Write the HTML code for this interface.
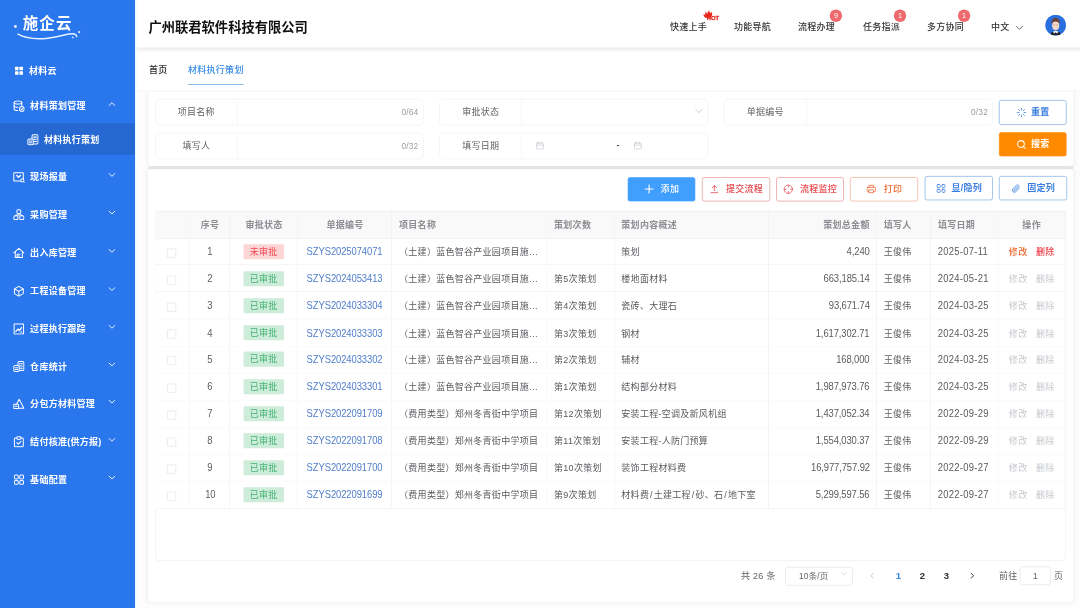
<!DOCTYPE html><html lang="zh-CN"><head><meta charset="utf-8"><title>材料执行策划</title><style>
*{box-sizing:border-box;margin:0;padding:0}
html,body{width:1080px;height:608px;overflow:hidden;background:#fdfdfd}
body{font-family:"Liberation Sans","Noto Sans CJK SC",sans-serif;color:#606266}
#app{position:absolute;left:0;top:0;width:1920px;height:1081px;transform:scale(0.5625);transform-origin:0 0;filter:opacity(1);background:#fdfdfd;overflow:hidden;font-size:16px;letter-spacing:.5px}
.abs{position:absolute}
.side{position:absolute;left:0;top:0;width:240px;height:1081px;background:#2a76ec;color:#fff}
.logo{position:absolute;left:40.5px;top:20.5px;font-size:27.5px;font-weight:700;letter-spacing:2px;line-height:44px;white-space:nowrap;font-family:"Liberation Sans","Noto Sans CJK SC",sans-serif}
.mi{position:absolute;left:0;width:240px;height:56px;line-height:56px;font-size:16px;font-weight:700;white-space:nowrap}
.mi .tx{position:absolute;left:53.5px;top:2px}
.mi svg.ic{position:absolute;left:23px;top:19px;width:21px;height:21px;stroke-width:1.7}
.mi svg.ar{position:absolute;left:192px;top:19px;width:14px;height:14px}
.mi.sub{background:#2668d1}
.mi.sub .tx{left:78px}
.mi.sub svg.ic{left:48px}
.head{position:absolute;left:242px;top:0;width:1678px;height:83px;background:#fff;z-index:3}
.hsh{position:absolute;left:242px;top:84px;width:1678px;height:9px;z-index:4;background:linear-gradient(#f3f3f3 0%,#f0f0f0 12%,#f1f1f1 40%,#f8f8f8 62%,#fafafa 85%,#fff 100%)}
.title{position:absolute;left:24px;top:0;line-height:96px;font-size:23.6px;letter-spacing:0;font-weight:700;color:#111;white-space:nowrap}
.nav{position:absolute;top:1.2px;line-height:96px;font-size:16px;color:#333;font-weight:500;white-space:nowrap}
.badge{position:absolute;width:22px;height:22px;border-radius:11px;letter-spacing:0;background:#ee6a6c;color:#fff;font-size:13px;line-height:22px;text-align:center}
.tabs{position:absolute;left:242px;top:84px;width:1678px;height:78px;background:#fff;z-index:2;border-bottom:2px solid #f9f9f9}
.tab{position:absolute;top:0;line-height:72px;font-size:16px;color:#2c2c2e;font-weight:500;white-space:nowrap}
.tab.on{color:#3a8ee6}
.card{position:absolute;background:#fff;border-radius:4px;box-shadow:0 0 10px rgba(0,0,0,.07)}
.grp{position:absolute;height:47px;border:1px solid #eceef1;border-radius:8px;background:#fff}
.grp .lb{position:absolute;left:0;top:0;width:146px;height:45px;line-height:46px;text-align:center;font-size:16px;color:#606266;border-right:1px solid #eef0f3}
.grp .cnt{position:absolute;right:8px;top:0;line-height:46px;font-size:15px;letter-spacing:.2px;color:#9a9da3}
.btn{position:absolute;height:44px;border-radius:4px;font-size:16px;font-weight:500;line-height:42px;white-space:nowrap;border:1.5px solid transparent}
.btn .t{position:absolute;top:0}
.btn svg{position:absolute}
table{border-collapse:collapse}
.tbl{position:absolute;left:275px;top:375px;width:1620px;height:622px;border:1px solid #ebeef5}
.th,.td{position:absolute;height:48.15px;line-height:52px;font-size:16px;white-space:nowrap;overflow:hidden;border-right:1px solid #eeeef0;border-bottom:1px solid #efeff1;padding:0 12px}
.th{background:#f9f9fa;color:#8c8e93;font-weight:700;height:49.5px;line-height:50px;border-top:1px solid #efeff1;z-index:2}
.td{color:#595b5f;background:#fff}
.c{text-align:center}.r{text-align:right}
.tag{display:inline-block;height:27px;line-height:27px;width:72.5px;padding:0;text-align:center;font-size:16px;border-radius:2px;vertical-align:middle;margin-top:-5px;margin-left:-1px}
.tag.g{background:#ceecda;color:#44b374}
.tag.rd{background:#fdd5d7;color:#f0484e}
i{font-style:normal;margin:0 1.6px}
.lk,.num,.amt,.dt{display:inline-block;line-height:1;font-size:18px;transform:scale(.93,1);transform-origin:50% 90%}
.lk{color:#4f7dcb;letter-spacing:-.15px;margin-left:-2px}
.num{letter-spacing:-.2px}.amt{letter-spacing:-.2px;transform-origin:100% 90%}.dt{letter-spacing:.55px;transform-origin:0 90%}
.cb{display:inline-block;width:16px;height:16px;border:1px solid #dddee1;border-radius:1.5px;background:#fff;vertical-align:middle;margin-top:0px;margin-left:-3px}
.op1{color:#f0682e;font-weight:500}.op2{color:#ee3b44;font-weight:500}.opd{color:#c6c9ce}.op2,.opd2{margin-left:15px}.opd2{color:#c6c9ce}
.pg{position:absolute;top:0;font-size:16px;color:#606266;line-height:50px;white-space:nowrap}
</style></head><body><div id="app">
<div class="side">
<div class="logo">施企云</div>
<svg class="abs" style="left:20px;top:30px;width:130px;height:46px" viewBox="0 0 130 46" fill="none" stroke="#e6f2ff" stroke-width="2.6" stroke-linecap="round"><path d="M11.800 30.800 C 25 38, 45 39.800, 62 38.300 C 80 36.800, 95 31, 107.500 30.100 C 113 29.800, 116 32, 116.400 35.200" /><circle cx="7.400" cy="17.100" r="2.600" fill="#e6f2ff" stroke="none"/><circle cx="120.800" cy="27.100" r="2" fill="#e6f2ff" stroke="none"/><circle cx="109.600" cy="36.500" r="1.600" fill="#cfe3ff" stroke="none"/></svg>
<div class="mi" style="top:96.44px"><svg class="ic" viewBox="0 0 20 20" style="" fill="none" stroke="currentColor" stroke-width="1.6" stroke-linecap="round" stroke-linejoin="round"><g fill="currentColor" stroke="none"><rect x="3.5" y="3.5" width="6" height="6" rx="1"/><rect x="11" y="3.5" width="6" height="6" rx="1"/><rect x="3.5" y="11" width="6" height="6" rx="1"/><rect x="11" y="11" width="6" height="6" rx="1"/></g></svg><span class="tx" style="margin-left:-2px">材料云</span></div>
<div class="mi" style="top:158.67px"><svg class="ic" viewBox="0 0 20 20" style="" fill="none" stroke="currentColor" stroke-width="1.6" stroke-linecap="round" stroke-linejoin="round"><ellipse cx="8.5" cy="4" rx="6.5" ry="2.6"/><path d="M2 4v11c0 1.500 2.800 2.600 6 2.600"/><path d="M15 4v5"/><path d="M2 9.500c0 1.500 2.900 2.600 6.500 2.600"/><circle cx="15" cy="15" r="4"/><path d="M13.300 15l1.300 1.300 2.200-2.400"/></svg><span class="tx">材料策划管理</span><svg class="ar" viewBox="0 0 14 14" style="" fill="none" stroke="currentColor" stroke-width="1.6" stroke-linecap="round" stroke-linejoin="round"><path d="M2 9.5 L7 4.5 L12 9.5"/></svg></div>
<div class="mi sub" style="top:219.11px"><svg class="ic" viewBox="0 0 20 20" style="" fill="none" stroke="currentColor" stroke-width="1.6" stroke-linecap="round" stroke-linejoin="round"><rect x="8.500" y="1.500" width="10" height="15.500" rx="2"/><path d="M11 5.500h5M11 9.200h5M11 12.900h5"/><rect x="1.500" y="8.500" width="9" height="10" rx="2" fill="#2668d1"/><path d="M4 12h4M4 15h4"/></svg><span class="tx">材料执行策划</span></div>
<div class="mi" style="top:284.89px"><svg class="ic" viewBox="0 0 20 20" style="" fill="none" stroke="currentColor" stroke-width="1.6" stroke-linecap="round" stroke-linejoin="round"><rect x="1.500" y="3" width="16" height="14" rx="0.500"/><path d="M6.500 7.500l3 3 3-3" stroke-width="2.400"/><circle cx="16" cy="16" r="2.700" fill="#2a76ec"/><path d="M18.200 18.200l1.300 1.300"/></svg><span class="tx">现场报量</span><svg class="ar" viewBox="0 0 14 14" style="" fill="none" stroke="currentColor" stroke-width="1.6" stroke-linecap="round" stroke-linejoin="round"><path d="M2 4.5 L7 9.5 L12 4.5"/></svg></div>
<div class="mi" style="top:352.44px"><svg class="ic" viewBox="0 0 20 20" style="" fill="none" stroke="currentColor" stroke-width="1.6" stroke-linecap="round" stroke-linejoin="round"><rect x="6.700" y="2" width="6.600" height="6" rx="2"/><rect x="1.500" y="12" width="7" height="6.500" rx="2"/><rect x="11.500" y="12" width="7" height="6.500" rx="2"/><path d="M10 8v2.500M5 12v-1.500h10V12"/></svg><span class="tx">采购管理</span><svg class="ar" viewBox="0 0 14 14" style="" fill="none" stroke="currentColor" stroke-width="1.6" stroke-linecap="round" stroke-linejoin="round"><path d="M2 4.5 L7 9.5 L12 4.5"/></svg></div>
<div class="mi" style="top:420.0px"><svg class="ic" viewBox="0 0 20 20" style="" fill="none" stroke="currentColor" stroke-width="1.6" stroke-linecap="round" stroke-linejoin="round"><path d="M1.500 10L10 2.500 18.500 10"/><path d="M4 8.500V18h12V8.500"/><path d="M7 18v-5.500h5M7 15.200h4"/></svg><span class="tx">出入库管理</span><svg class="ar" viewBox="0 0 14 14" style="" fill="none" stroke="currentColor" stroke-width="1.6" stroke-linecap="round" stroke-linejoin="round"><path d="M2 4.5 L7 9.5 L12 4.5"/></svg></div>
<div class="mi" style="top:487.55999999999995px"><svg class="ic" viewBox="0 0 20 20" style="" fill="none" stroke="currentColor" stroke-width="1.6" stroke-linecap="round" stroke-linejoin="round"><path d="M10 2l7.500 4.200v8L10 18.500 2.500 14.200v-8z"/><path d="M3 6.500l7 4 7-4M10 10.500v7.500"/></svg><span class="tx">工程设备管理</span><svg class="ar" viewBox="0 0 14 14" style="" fill="none" stroke="currentColor" stroke-width="1.6" stroke-linecap="round" stroke-linejoin="round"><path d="M2 4.5 L7 9.5 L12 4.5"/></svg></div>
<div class="mi" style="top:555.11px"><svg class="ic" viewBox="0 0 20 20" style="" fill="none" stroke="currentColor" stroke-width="1.6" stroke-linecap="round" stroke-linejoin="round"><rect x="2" y="2" width="16" height="17" rx="0.500"/><path d="M5 14.500l3.500-4 2.500 2.500 3.500-5" stroke-width="2.200"/><path d="M13 15.500h2"/></svg><span class="tx">过程执行跟踪</span><svg class="ar" viewBox="0 0 14 14" style="" fill="none" stroke="currentColor" stroke-width="1.6" stroke-linecap="round" stroke-linejoin="round"><path d="M2 4.5 L7 9.5 L12 4.5"/></svg></div>
<div class="mi" style="top:621.78px"><svg class="ic" viewBox="0 0 20 20" style="" fill="none" stroke="currentColor" stroke-width="1.6" stroke-linecap="round" stroke-linejoin="round"><rect x="8.500" y="1.500" width="10" height="15.500" rx="2"/><path d="M11 5.500h5M11 9.200h5M11 12.900h5"/><rect x="1.500" y="8.500" width="9" height="10" rx="2" fill="#2a76ec"/><path d="M4 12h4M4 15h4"/></svg><span class="tx">仓库统计</span><svg class="ar" viewBox="0 0 14 14" style="" fill="none" stroke="currentColor" stroke-width="1.6" stroke-linecap="round" stroke-linejoin="round"><path d="M2 4.5 L7 9.5 L12 4.5"/></svg></div>
<div class="mi" style="top:688.44px"><svg class="ic" viewBox="0 0 20 20" style="" fill="none" stroke="currentColor" stroke-width="1.6" stroke-linecap="round" stroke-linejoin="round"><path d="M10.500 2.500L18.500 18H2.500z"/><rect x="1.500" y="11" width="8" height="7.500" rx="0.500" fill="#2a76ec"/><path d="M4 14.700h3"/></svg><span class="tx">分包方材料管理</span><svg class="ar" viewBox="0 0 14 14" style="" fill="none" stroke="currentColor" stroke-width="1.6" stroke-linecap="round" stroke-linejoin="round"><path d="M2 4.5 L7 9.5 L12 4.5"/></svg></div>
<div class="mi" style="top:756.0px"><svg class="ic" viewBox="0 0 20 20" style="" fill="none" stroke="currentColor" stroke-width="1.6" stroke-linecap="round" stroke-linejoin="round"><rect x="2.500" y="3.500" width="15" height="15" rx="1.500"/><rect x="6.500" y="1.500" width="7" height="4" rx="1" fill="#2a76ec"/><path d="M6.500 11.500l2.500 2.500 4.500-4.800"/></svg><span class="tx">结付核准(供方报)</span><svg class="ar" viewBox="0 0 14 14" style="" fill="none" stroke="currentColor" stroke-width="1.6" stroke-linecap="round" stroke-linejoin="round"><path d="M2 4.5 L7 9.5 L12 4.5"/></svg></div>
<div class="mi" style="top:822.84px"><svg class="ic" viewBox="0 0 20 20" style="" fill="none" stroke="currentColor" stroke-width="1.6" stroke-linecap="round" stroke-linejoin="round"><rect x="2.500" y="2.500" width="6.400" height="6.400" rx="1.800"/><rect x="11.500" y="2.500" width="6.400" height="6.400" rx="1.800"/><rect x="2.500" y="11.500" width="6.400" height="6.400" rx="1.800"/><rect x="11.500" y="11.500" width="6.400" height="6.400" rx="1.800"/></svg><span class="tx">基础配置</span><svg class="ar" viewBox="0 0 14 14" style="" fill="none" stroke="currentColor" stroke-width="1.6" stroke-linecap="round" stroke-linejoin="round"><path d="M2 4.5 L7 9.5 L12 4.5"/></svg></div>
</div>
<div class="abs" style="left:240px;top:0;width:3px;height:1081px;background:linear-gradient(90deg,#e2fdff,#effefe);z-index:5"></div>
<div class="head"><div class="abs" style="left:-2px;top:0;width:1680px;height:84px">
<div class="title">广州联君软件科技有限公司</div>
<div class="nav" style="left:951.1099999999999px">快速上手</div>
<div class="nav" style="left:1064.89px">功能导航</div>
<div class="nav" style="left:1178.67px">流程办理</div>
<div class="nav" style="left:1294.22px">任务指派</div>
<div class="nav" style="left:1408.0px">多方协同</div>
<div class="nav" style="left:1521.78px">中文</div>
<div class="badge" style="left:1235.22px;top:16.56px">9</div>
<div class="badge" style="left:1349.0px;top:16.56px">1</div>
<div class="badge" style="left:1462.96px;top:16.56px">1</div>
<svg class="abs" style="left:1008.0px;top:16.0px;width:35.56px;height:21.33px" viewBox="0 0 35.56 21.33"><path d="M6 15.500 C3.500 14 2.500 11.500 2.700 9 C4 10.200 5 10.400 6 10.200 C5.200 8 5.800 6 7.500 4.800 C7.800 7 8.800 8 10 8.200 C9.800 5.500 11 3.500 13 2.600 C13 5 14 6.500 15.500 7.500 C16.200 6.800 16.500 6 16.500 5 C18 6.500 18.500 8.500 18 10.500 C17.500 12.500 16 14.500 14 15.800 Z" fill="#e8291f"/><text x="8.500" y="19.200" font-family="Liberation Sans,sans-serif" font-size="10.500" font-weight="700" letter-spacing="-0.2" fill="#e8291f" stroke="#e8291f" stroke-width="0.500">HOT</text></svg>
<svg class="abs" viewBox="0 0 14 14" style="left:1565.33px;top:42px;width:15px;height:15px;color:#606266" fill="none" stroke="currentColor" stroke-width="1.6" stroke-linecap="round" stroke-linejoin="round"><path d="M2 4.5 L7 9.5 L12 4.5"/></svg>
<svg class="abs" style="left:1617.9199999999998px;top:25.570000000000004px;width:37.4px;height:37.4px" viewBox="0 0 40 40"><defs><clipPath id="av"><circle cx="20" cy="20" r="20"/></clipPath></defs><circle cx="20" cy="20" r="20" fill="#2a6fe0"/><g clip-path="url(#av)"><path d="M9 42 C9 34 14 31.5 20 31.5 C26 31.5 31 34 31 42Z" fill="#23262f"/><path d="M14.500 32.500 L20 30 L25.500 32.500 L22.500 36 L20 33.500 L17.500 36Z" fill="#eef3fb"/><path d="M12 19 L15 27 L13 22Z" fill="#dfe8f7"/><ellipse cx="20" cy="20.500" rx="6.800" ry="8.600" fill="#f4d6c4"/><path d="M12.300 19 C11.500 10.500 15.500 6.500 20 6.500 C24.500 6.500 28.500 10.500 27.700 19 C26.500 14.500 24.500 13 20 13 C15.500 13 13.500 14.500 12.300 19Z" fill="#6b4030"/><path d="M16 19.500h2.500M21.500 19.500H24" stroke="#7a5a48" stroke-width="0.900" fill="none"/></g></svg>
</div></div>
<div class="hsh"></div>
<div class="tabs"><div class="abs" style="left:-2px;top:4px;width:1680px;height:72px">
<div class="tab" style="left:24.889999999999986px">首页</div>
<div class="tab on" style="left:94.22000000000003px">材料执行策划</div>
<div class="abs" style="left:94.22000000000003px;top:61.8px;width:99px;height:1.6px;background:#3088e4"></div>
</div></div>
<div class="abs" style="left:264.0px;top:293.33px;width:1643.56px;height:8.89px;background:#eeeeee"></div>
<div class="card" style="left:263.64px;top:162.67px;width:1643.91px;height:132.44px"></div>
<div class="grp" style="left:275.56px;top:175.82px;width:477.33px"><div class="lb">项目名称</div><span class="cnt">0/64</span></div>
<div class="grp" style="left:781.16px;top:175.82px;width:478.22px"><div class="lb">审批状态</div><svg class="abs" viewBox="0 0 14 14" style="right:8px;top:13.5px;width:15px;height:15px;color:#b4b8bf;stroke-width:1.2" fill="none" stroke="currentColor" stroke-width="1.6" stroke-linecap="round" stroke-linejoin="round"><path d="M2 4.5 L7 9.5 L12 4.5"/></svg></div>
<div class="grp" style="left:1287.11px;top:175.82px;width:478.22px"><div class="lb">单据编号</div><span class="cnt">0/32</span></div>
<div class="grp" style="left:275.56px;top:235.91px;width:477.33px"><div class="lb">填写人</div><span class="cnt">0/32</span></div>
<div class="grp" style="left:781.16px;top:235.91px;width:478.22px"><div class="lb">填写日期</div><svg class="abs" viewBox="0 0 16 16" style="left:170px;top:14px;width:16px;height:16px;color:#c0c4cc;stroke-width:1.1" fill="none" stroke="currentColor" stroke-width="1.6" stroke-linecap="round" stroke-linejoin="round"><rect x="2" y="3" width="12" height="11" rx="1"/><path d="M2 7h12M5.500 1.500v3M10.500 1.500v3"/></svg><span class="abs" style="left:314px;top:0;line-height:42px;color:#505256;font-size:16px;font-weight:700">-</span><svg class="abs" viewBox="0 0 16 16" style="left:344px;top:14px;width:16px;height:16px;color:#c0c4cc;stroke-width:1.1" fill="none" stroke="currentColor" stroke-width="1.6" stroke-linecap="round" stroke-linejoin="round"><rect x="2" y="3" width="12" height="11" rx="1"/><path d="M2 7h12M5.500 1.500v3M10.500 1.500v3"/></svg></div>
<div class="btn" style="left:1776.0px;top:178.31px;width:120.18px;height:43.73px;line-height:41.73px;color:#3a7fe0;background:#fff;border-color:#5f9ade;font-weight:700"><svg style="left:30px;top:50%;margin-top:-9.0px;width:18px;height:18px" viewBox="0 0 18 18" fill="none" stroke="currentColor" stroke-width="1.4" stroke-linecap="round" stroke-linejoin="round"><path d="M9 1.500v3M9 13.500v3M1.500 9h3M13.500 9h3M3.700 3.700l2.100 2.100M12.200 12.200l2.100 2.100M3.700 14.300l2.100-2.100M12.200 5.800l2.100-2.100"/></svg><span class="t" style="left:56px">重置</span></div>
<div class="btn" style="left:1776.0px;top:235.38px;width:120.18px;height:43.02px;line-height:41.02px;color:#fff;background:#ff8a00;border-color:#ff8a00;font-weight:700"><svg style="left:30px;top:50%;margin-top:-9.0px;width:18px;height:18px" viewBox="0 0 18 18" fill="none" stroke="currentColor" stroke-width="1.8" stroke-linecap="round" stroke-linejoin="round"><circle cx="8" cy="8" r="6"/><path d="M12.500 12.500l3.500 3.500"/></svg><span class="t" style="left:56px">搜索</span></div>
<div class="card" style="left:263.11px;top:300.98px;width:1644.44px;height:768.89px"></div>
<div class="btn" style="left:1116.44px;top:315.02px;width:120.0px;height:42.67px;line-height:40.67px;color:#fff;background:#409eff;border-color:#409eff;font-weight:500"><svg style="left:28px;top:50%;margin-top:-9.0px;width:18px;height:18px" viewBox="0 0 18 18" fill="none" stroke="currentColor" stroke-width="2" stroke-linecap="round" stroke-linejoin="round"><path d="M9 2v14M2 9h14"/></svg><span class="t" style="left:57px">添加</span></div>
<div class="btn" style="left:1248.0px;top:315.02px;width:120.89px;height:42.67px;line-height:40.67px;color:#e6484c;background:#fff;border-color:#e47777;font-weight:500"><svg style="left:12px;top:50%;margin-top:-9.0px;width:18px;height:18px" viewBox="0 0 18 18" fill="none" stroke="currentColor" stroke-width="1.4" stroke-linecap="round" stroke-linejoin="round"><path d="M9 12V3M5 7l4-4 4 4M3 15.500h12"/></svg><span class="t" style="left:41.5px">提交流程</span></div>
<div class="btn" style="left:1379.56px;top:315.02px;width:120.89px;height:42.67px;line-height:40.67px;color:#e6484c;background:#fff;border-color:#e47777;font-weight:500"><svg style="left:11px;top:50%;margin-top:-9.5px;width:19px;height:19px" viewBox="0 0 18 18" fill="none" stroke="currentColor" stroke-width="1.2" stroke-linecap="round" stroke-linejoin="round"><circle cx="9" cy="9" r="7"/><path d="M9 2v3.500M9 12.500V16M2 9h3.500M12.500 9H16"/></svg><span class="t" style="left:41.5px">流程监控</span></div>
<div class="btn" style="left:1511.11px;top:315.02px;width:120.89px;height:42.67px;line-height:40.67px;color:#ee6a34;background:#fff;border-color:#eb9a75;font-weight:500"><svg style="left:28px;top:50%;margin-top:-9.0px;width:18px;height:18px" viewBox="0 0 18 18" fill="none" stroke="currentColor" stroke-width="1.4" stroke-linecap="round" stroke-linejoin="round"><path d="M5 6V2.500h8V6"/><rect x="1.500" y="6" width="15" height="7.500" rx="1.500"/><rect x="5" y="10.500" width="8" height="5" fill="#fff"/></svg><span class="t" style="left:59px">打印</span></div>
<div class="btn" style="left:1644.44px;top:313.42px;width:120.89px;height:43.02px;line-height:41.02px;color:#3a7fe0;background:#fff;border-color:#5f9ade;font-weight:700"><svg style="left:19px;top:50%;margin-top:-9.0px;width:18px;height:18px" viewBox="0 0 18 18" fill="none" stroke="currentColor" stroke-width="1.4" stroke-linecap="round" stroke-linejoin="round"><rect x="2" y="2" width="5.500" height="5.500" rx="1.500"/><rect x="10.500" y="2" width="5.500" height="5.500" rx="1.500"/><rect x="2" y="10.500" width="5.500" height="5.500" rx="1.500"/><rect x="10.500" y="10.500" width="5.500" height="5.500" rx="1.500"/></svg><span class="t" style="left:46px">显/隐列</span></div>
<div class="btn" style="left:1776.0px;top:313.42px;width:120.89px;height:43.02px;line-height:41.02px;color:#3a7fe0;background:#fff;border-color:#5f9ade;font-weight:700"><svg style="left:20px;top:50%;margin-top:-9.0px;width:18px;height:18px" viewBox="0 0 18 18" fill="none" stroke="currentColor" stroke-width="1.4" stroke-linecap="round" stroke-linejoin="round"><path d="M15 8.500l-6.200 6.200a3.500 3.500 0 0 1-5-5l6.500-6.500a2.400 2.400 0 0 1 3.400 3.400l-6.400 6.400a1.200 1.200 0 0 1-1.700-1.700l5.800-5.800"/></svg><span class="t" style="left:49px">固定列</span></div>
<div class="abs" style="left:275.56px;top:375.11px;width:1619.56px;height:622.22px;border:1px solid #ececee;border-radius:0 0 6px 6px;background:#fff"></div>
<div class="th " style="left:275.56px;top:375.11px;width:62.75px;"></div>
<div class="th c" style="left:338.31px;top:375.11px;width:71.11000000000001px;">序号</div>
<div class="th c" style="left:409.42px;top:375.11px;width:120.88999999999993px;">审批状态</div>
<div class="th c" style="left:530.31px;top:375.11px;width:167.11px;">单据编号</div>
<div class="th " style="left:697.42px;top:375.11px;width:275.56000000000006px;">项目名称</div>
<div class="th " style="left:972.98px;top:375.11px;width:119.63999999999987px;">策划次数</div>
<div class="th " style="left:1092.62px;top:375.11px;width:274.49px;">策划内容概述</div>
<div class="th r" style="left:1367.11px;top:375.11px;width:192.0px;">策划总金额</div>
<div class="th " style="left:1559.11px;top:375.11px;width:96.36000000000013px;">填写人</div>
<div class="th " style="left:1655.47px;top:375.11px;width:119.28999999999996px;">填写日期</div>
<div class="th c" style="left:1774.76px;top:375.11px;width:119.6400000000001px;">操作</div>
<div class="td c" style="left:275.56px;top:423.11px;width:62.75px;padding:0;line-height:52.0px"><span class="cb"></span></div>
<div class="td c" style="left:338.31px;top:423.11px;width:71.11000000000001px;line-height:52.0px"><span class="num">1</span></div>
<div class="td c" style="left:409.42px;top:423.11px;width:120.88999999999993px;padding:0;line-height:52.0px"><span class="tag rd">未审批</span></div>
<div class="td c" style="left:530.31px;top:423.11px;width:167.11px;padding:0;line-height:52.0px"><span class="lk">SZYS2025074071</span></div>
<div class="td " style="left:697.42px;top:423.11px;width:275.56000000000006px;padding:0 0 0 12px;line-height:52.0px">（土建）蓝色智谷产业园项目施…</div>
<div class="td " style="left:972.98px;top:423.11px;width:119.63999999999987px;line-height:52.0px"></div>
<div class="td " style="left:1092.62px;top:423.11px;width:274.49px;line-height:52.0px">策划</div>
<div class="td r" style="left:1367.11px;top:423.11px;width:192.0px;line-height:52.0px"><span class="amt">4,240</span></div>
<div class="td " style="left:1559.11px;top:423.11px;width:96.36000000000013px;line-height:52.0px">王俊伟</div>
<div class="td " style="left:1655.47px;top:423.11px;width:119.28999999999996px;line-height:52.0px"><span class="dt">2025-07-11</span></div>
<div class="td c" style="left:1774.76px;top:423.11px;width:119.6400000000001px;padding:0;line-height:52.0px"><span class="op1">修改</span><span class="op2">删除</span></div>
<div class="td c" style="left:275.56px;top:471.26px;width:62.75px;padding:0;line-height:51.71px"><span class="cb"></span></div>
<div class="td c" style="left:338.31px;top:471.26px;width:71.11000000000001px;line-height:51.71px"><span class="num">2</span></div>
<div class="td c" style="left:409.42px;top:471.26px;width:120.88999999999993px;padding:0;line-height:51.71px"><span class="tag g">已审批</span></div>
<div class="td c" style="left:530.31px;top:471.26px;width:167.11px;padding:0;line-height:51.71px"><span class="lk">SZYS2024053413</span></div>
<div class="td " style="left:697.42px;top:471.26px;width:275.56000000000006px;padding:0 0 0 12px;line-height:51.71px">（土建）蓝色智谷产业园项目施…</div>
<div class="td " style="left:972.98px;top:471.26px;width:119.63999999999987px;line-height:51.71px">第5次策划</div>
<div class="td " style="left:1092.62px;top:471.26px;width:274.49px;line-height:51.71px">楼地面材料</div>
<div class="td r" style="left:1367.11px;top:471.26px;width:192.0px;line-height:51.71px"><span class="amt">663,185.14</span></div>
<div class="td " style="left:1559.11px;top:471.26px;width:96.36000000000013px;line-height:51.71px">王俊伟</div>
<div class="td " style="left:1655.47px;top:471.26px;width:119.28999999999996px;line-height:51.71px"><span class="dt">2024-05-21</span></div>
<div class="td c" style="left:1774.76px;top:471.26px;width:119.6400000000001px;padding:0;line-height:51.71px"><span class="opd">修改</span><span class="opd2">删除</span></div>
<div class="td c" style="left:275.56px;top:519.41px;width:62.75px;padding:0;line-height:51.42px"><span class="cb"></span></div>
<div class="td c" style="left:338.31px;top:519.41px;width:71.11000000000001px;line-height:51.42px"><span class="num">3</span></div>
<div class="td c" style="left:409.42px;top:519.41px;width:120.88999999999993px;padding:0;line-height:51.42px"><span class="tag g">已审批</span></div>
<div class="td c" style="left:530.31px;top:519.41px;width:167.11px;padding:0;line-height:51.42px"><span class="lk">SZYS2024033304</span></div>
<div class="td " style="left:697.42px;top:519.41px;width:275.56000000000006px;padding:0 0 0 12px;line-height:51.42px">（土建）蓝色智谷产业园项目施…</div>
<div class="td " style="left:972.98px;top:519.41px;width:119.63999999999987px;line-height:51.42px">第4次策划</div>
<div class="td " style="left:1092.62px;top:519.41px;width:274.49px;line-height:51.42px">瓷砖、大理石</div>
<div class="td r" style="left:1367.11px;top:519.41px;width:192.0px;line-height:51.42px"><span class="amt">93,671.74</span></div>
<div class="td " style="left:1559.11px;top:519.41px;width:96.36000000000013px;line-height:51.42px">王俊伟</div>
<div class="td " style="left:1655.47px;top:519.41px;width:119.28999999999996px;line-height:51.42px"><span class="dt">2024-03-25</span></div>
<div class="td c" style="left:1774.76px;top:519.41px;width:119.6400000000001px;padding:0;line-height:51.42px"><span class="opd">修改</span><span class="opd2">删除</span></div>
<div class="td c" style="left:275.56px;top:567.56px;width:62.75px;padding:0;line-height:51.13px"><span class="cb"></span></div>
<div class="td c" style="left:338.31px;top:567.56px;width:71.11000000000001px;line-height:51.13px"><span class="num">4</span></div>
<div class="td c" style="left:409.42px;top:567.56px;width:120.88999999999993px;padding:0;line-height:51.13px"><span class="tag g">已审批</span></div>
<div class="td c" style="left:530.31px;top:567.56px;width:167.11px;padding:0;line-height:51.13px"><span class="lk">SZYS2024033303</span></div>
<div class="td " style="left:697.42px;top:567.56px;width:275.56000000000006px;padding:0 0 0 12px;line-height:51.13px">（土建）蓝色智谷产业园项目施…</div>
<div class="td " style="left:972.98px;top:567.56px;width:119.63999999999987px;line-height:51.13px">第3次策划</div>
<div class="td " style="left:1092.62px;top:567.56px;width:274.49px;line-height:51.13px">钢材</div>
<div class="td r" style="left:1367.11px;top:567.56px;width:192.0px;line-height:51.13px"><span class="amt">1,617,302.71</span></div>
<div class="td " style="left:1559.11px;top:567.56px;width:96.36000000000013px;line-height:51.13px">王俊伟</div>
<div class="td " style="left:1655.47px;top:567.56px;width:119.28999999999996px;line-height:51.13px"><span class="dt">2024-03-25</span></div>
<div class="td c" style="left:1774.76px;top:567.56px;width:119.6400000000001px;padding:0;line-height:51.13px"><span class="opd">修改</span><span class="opd2">删除</span></div>
<div class="td c" style="left:275.56px;top:615.71px;width:62.75px;padding:0;line-height:50.84px"><span class="cb"></span></div>
<div class="td c" style="left:338.31px;top:615.71px;width:71.11000000000001px;line-height:50.84px"><span class="num">5</span></div>
<div class="td c" style="left:409.42px;top:615.71px;width:120.88999999999993px;padding:0;line-height:50.84px"><span class="tag g">已审批</span></div>
<div class="td c" style="left:530.31px;top:615.71px;width:167.11px;padding:0;line-height:50.84px"><span class="lk">SZYS2024033302</span></div>
<div class="td " style="left:697.42px;top:615.71px;width:275.56000000000006px;padding:0 0 0 12px;line-height:50.84px">（土建）蓝色智谷产业园项目施…</div>
<div class="td " style="left:972.98px;top:615.71px;width:119.63999999999987px;line-height:50.84px">第2次策划</div>
<div class="td " style="left:1092.62px;top:615.71px;width:274.49px;line-height:50.84px">辅材</div>
<div class="td r" style="left:1367.11px;top:615.71px;width:192.0px;line-height:50.84px"><span class="amt">168,000</span></div>
<div class="td " style="left:1559.11px;top:615.71px;width:96.36000000000013px;line-height:50.84px">王俊伟</div>
<div class="td " style="left:1655.47px;top:615.71px;width:119.28999999999996px;line-height:50.84px"><span class="dt">2024-03-25</span></div>
<div class="td c" style="left:1774.76px;top:615.71px;width:119.6400000000001px;padding:0;line-height:50.84px"><span class="opd">修改</span><span class="opd2">删除</span></div>
<div class="td c" style="left:275.56px;top:663.86px;width:62.75px;padding:0;line-height:50.55px"><span class="cb"></span></div>
<div class="td c" style="left:338.31px;top:663.86px;width:71.11000000000001px;line-height:50.55px"><span class="num">6</span></div>
<div class="td c" style="left:409.42px;top:663.86px;width:120.88999999999993px;padding:0;line-height:50.55px"><span class="tag g">已审批</span></div>
<div class="td c" style="left:530.31px;top:663.86px;width:167.11px;padding:0;line-height:50.55px"><span class="lk">SZYS2024033301</span></div>
<div class="td " style="left:697.42px;top:663.86px;width:275.56000000000006px;padding:0 0 0 12px;line-height:50.55px">（土建）蓝色智谷产业园项目施…</div>
<div class="td " style="left:972.98px;top:663.86px;width:119.63999999999987px;line-height:50.55px">第1次策划</div>
<div class="td " style="left:1092.62px;top:663.86px;width:274.49px;line-height:50.55px">结构部分材料</div>
<div class="td r" style="left:1367.11px;top:663.86px;width:192.0px;line-height:50.55px"><span class="amt">1,987,973.76</span></div>
<div class="td " style="left:1559.11px;top:663.86px;width:96.36000000000013px;line-height:50.55px">王俊伟</div>
<div class="td " style="left:1655.47px;top:663.86px;width:119.28999999999996px;line-height:50.55px"><span class="dt">2024-03-25</span></div>
<div class="td c" style="left:1774.76px;top:663.86px;width:119.6400000000001px;padding:0;line-height:50.55px"><span class="opd">修改</span><span class="opd2">删除</span></div>
<div class="td c" style="left:275.56px;top:712.01px;width:62.75px;padding:0;line-height:50.26px"><span class="cb"></span></div>
<div class="td c" style="left:338.31px;top:712.01px;width:71.11000000000001px;line-height:50.26px"><span class="num">7</span></div>
<div class="td c" style="left:409.42px;top:712.01px;width:120.88999999999993px;padding:0;line-height:50.26px"><span class="tag g">已审批</span></div>
<div class="td c" style="left:530.31px;top:712.01px;width:167.11px;padding:0;line-height:50.26px"><span class="lk">SZYS2022091709</span></div>
<div class="td " style="left:697.42px;top:712.01px;width:275.56000000000006px;padding:0 0 0 12px;line-height:50.26px">（费用类型）郑州冬青街中学项目</div>
<div class="td " style="left:972.98px;top:712.01px;width:119.63999999999987px;line-height:50.26px">第12次策划</div>
<div class="td " style="left:1092.62px;top:712.01px;width:274.49px;line-height:50.26px">安装工程-空调及新风机组</div>
<div class="td r" style="left:1367.11px;top:712.01px;width:192.0px;line-height:50.26px"><span class="amt">1,437,052.34</span></div>
<div class="td " style="left:1559.11px;top:712.01px;width:96.36000000000013px;line-height:50.26px">王俊伟</div>
<div class="td " style="left:1655.47px;top:712.01px;width:119.28999999999996px;line-height:50.26px"><span class="dt">2022-09-29</span></div>
<div class="td c" style="left:1774.76px;top:712.01px;width:119.6400000000001px;padding:0;line-height:50.26px"><span class="opd">修改</span><span class="opd2">删除</span></div>
<div class="td c" style="left:275.56px;top:760.16px;width:62.75px;padding:0;line-height:49.97px"><span class="cb"></span></div>
<div class="td c" style="left:338.31px;top:760.16px;width:71.11000000000001px;line-height:49.97px"><span class="num">8</span></div>
<div class="td c" style="left:409.42px;top:760.16px;width:120.88999999999993px;padding:0;line-height:49.97px"><span class="tag g">已审批</span></div>
<div class="td c" style="left:530.31px;top:760.16px;width:167.11px;padding:0;line-height:49.97px"><span class="lk">SZYS2022091708</span></div>
<div class="td " style="left:697.42px;top:760.16px;width:275.56000000000006px;padding:0 0 0 12px;line-height:49.97px">（费用类型）郑州冬青街中学项目</div>
<div class="td " style="left:972.98px;top:760.16px;width:119.63999999999987px;line-height:49.97px">第11次策划</div>
<div class="td " style="left:1092.62px;top:760.16px;width:274.49px;line-height:49.97px">安装工程-人防门预算</div>
<div class="td r" style="left:1367.11px;top:760.16px;width:192.0px;line-height:49.97px"><span class="amt">1,554,030.37</span></div>
<div class="td " style="left:1559.11px;top:760.16px;width:96.36000000000013px;line-height:49.97px">王俊伟</div>
<div class="td " style="left:1655.47px;top:760.16px;width:119.28999999999996px;line-height:49.97px"><span class="dt">2022-09-29</span></div>
<div class="td c" style="left:1774.76px;top:760.16px;width:119.6400000000001px;padding:0;line-height:49.97px"><span class="opd">修改</span><span class="opd2">删除</span></div>
<div class="td c" style="left:275.56px;top:808.31px;width:62.75px;padding:0;line-height:49.68px"><span class="cb"></span></div>
<div class="td c" style="left:338.31px;top:808.31px;width:71.11000000000001px;line-height:49.68px"><span class="num">9</span></div>
<div class="td c" style="left:409.42px;top:808.31px;width:120.88999999999993px;padding:0;line-height:49.68px"><span class="tag g">已审批</span></div>
<div class="td c" style="left:530.31px;top:808.31px;width:167.11px;padding:0;line-height:49.68px"><span class="lk">SZYS2022091700</span></div>
<div class="td " style="left:697.42px;top:808.31px;width:275.56000000000006px;padding:0 0 0 12px;line-height:49.68px">（费用类型）郑州冬青街中学项目</div>
<div class="td " style="left:972.98px;top:808.31px;width:119.63999999999987px;line-height:49.68px">第10次策划</div>
<div class="td " style="left:1092.62px;top:808.31px;width:274.49px;line-height:49.68px">装饰工程材料费</div>
<div class="td r" style="left:1367.11px;top:808.31px;width:192.0px;line-height:49.68px"><span class="amt">16,977,757.92</span></div>
<div class="td " style="left:1559.11px;top:808.31px;width:96.36000000000013px;line-height:49.68px">王俊伟</div>
<div class="td " style="left:1655.47px;top:808.31px;width:119.28999999999996px;line-height:49.68px"><span class="dt">2022-09-27</span></div>
<div class="td c" style="left:1774.76px;top:808.31px;width:119.6400000000001px;padding:0;line-height:49.68px"><span class="opd">修改</span><span class="opd2">删除</span></div>
<div class="td c" style="left:275.56px;top:856.46px;width:62.75px;padding:0;line-height:49.39px"><span class="cb"></span></div>
<div class="td c" style="left:338.31px;top:856.46px;width:71.11000000000001px;line-height:49.39px"><span class="num">10</span></div>
<div class="td c" style="left:409.42px;top:856.46px;width:120.88999999999993px;padding:0;line-height:49.39px"><span class="tag g">已审批</span></div>
<div class="td c" style="left:530.31px;top:856.46px;width:167.11px;padding:0;line-height:49.39px"><span class="lk">SZYS2022091699</span></div>
<div class="td " style="left:697.42px;top:856.46px;width:275.56000000000006px;padding:0 0 0 12px;line-height:49.39px">（费用类型）郑州冬青街中学项目</div>
<div class="td " style="left:972.98px;top:856.46px;width:119.63999999999987px;line-height:49.39px">第9次策划</div>
<div class="td " style="left:1092.62px;top:856.46px;width:274.49px;line-height:49.39px">材料费<i>/</i>土建工程<i>/</i>砂、石<i>/</i>地下室</div>
<div class="td r" style="left:1367.11px;top:856.46px;width:192.0px;line-height:49.39px"><span class="amt">5,299,597.56</span></div>
<div class="td " style="left:1559.11px;top:856.46px;width:96.36000000000013px;line-height:49.39px">王俊伟</div>
<div class="td " style="left:1655.47px;top:856.46px;width:119.28999999999996px;line-height:49.39px"><span class="dt">2022-09-27</span></div>
<div class="td c" style="left:1774.76px;top:856.46px;width:119.6400000000001px;padding:0;line-height:49.39px"><span class="opd">修改</span><span class="opd2">删除</span></div>
<div class="pg" style="left:1317.33px;top:999.61px;">共 26 条</div>
<div class="abs" style="left:1395.56px;top:1008.0px;width:120.89px;height:33.07px;border:1px solid #dcdfe6;border-radius:4px;background:#fff"></div>
<div class="pg" style="left:1420.44px;top:999.61px;font-size:15px;letter-spacing:.3px">10条/页</div>
<svg class="abs" viewBox="0 0 14 14" style="left:1494.4px;top:1013.87px;width:12px;height:12px;color:#c0c4cc;stroke-width:1.2" fill="none" stroke="currentColor" stroke-width="1.6" stroke-linecap="round" stroke-linejoin="round"><path d="M2 4.5 L7 9.5 L12 4.5"/></svg>
<svg class="abs" viewBox="0 0 14 14" style="left:1544.18px;top:1016.53px;width:13px;height:13px;color:#c0c4cc;stroke-width:1.8" fill="none" stroke="currentColor" stroke-width="1.6" stroke-linecap="round" stroke-linejoin="round"><path d="M9 2.500L4.500 7 9 11.500"/></svg>
<div class="pg" style="left:1592.36px;top:999.61px;color:#3d84e0;font-weight:700;font-size:17px">1</div>
<div class="pg" style="left:1635.02px;top:999.61px;color:#303133;font-weight:700;font-size:17px">2</div>
<div class="pg" style="left:1677.69px;top:999.61px;color:#303133;font-weight:700;font-size:17px">3</div>
<svg class="abs" viewBox="0 0 14 14" style="left:1721.96px;top:1016.53px;width:13px;height:13px;color:#303133;stroke-width:1.8" fill="none" stroke="currentColor" stroke-width="1.6" stroke-linecap="round" stroke-linejoin="round"><path d="M5 2.500L9.500 7 5 11.500"/></svg>
<div class="pg" style="left:1776.0px;top:999.61px;">前往</div>
<div class="abs" style="left:1813.33px;top:1007.11px;width:55.11px;height:33.07px;border:1px solid #dcdfe6;border-radius:4px;background:#fff;text-align:center;line-height:32.78px;font-size:16px;color:#606266">1</div>
<div class="pg" style="left:1873.78px;top:999.61px;">页</div>
</div></body></html>
